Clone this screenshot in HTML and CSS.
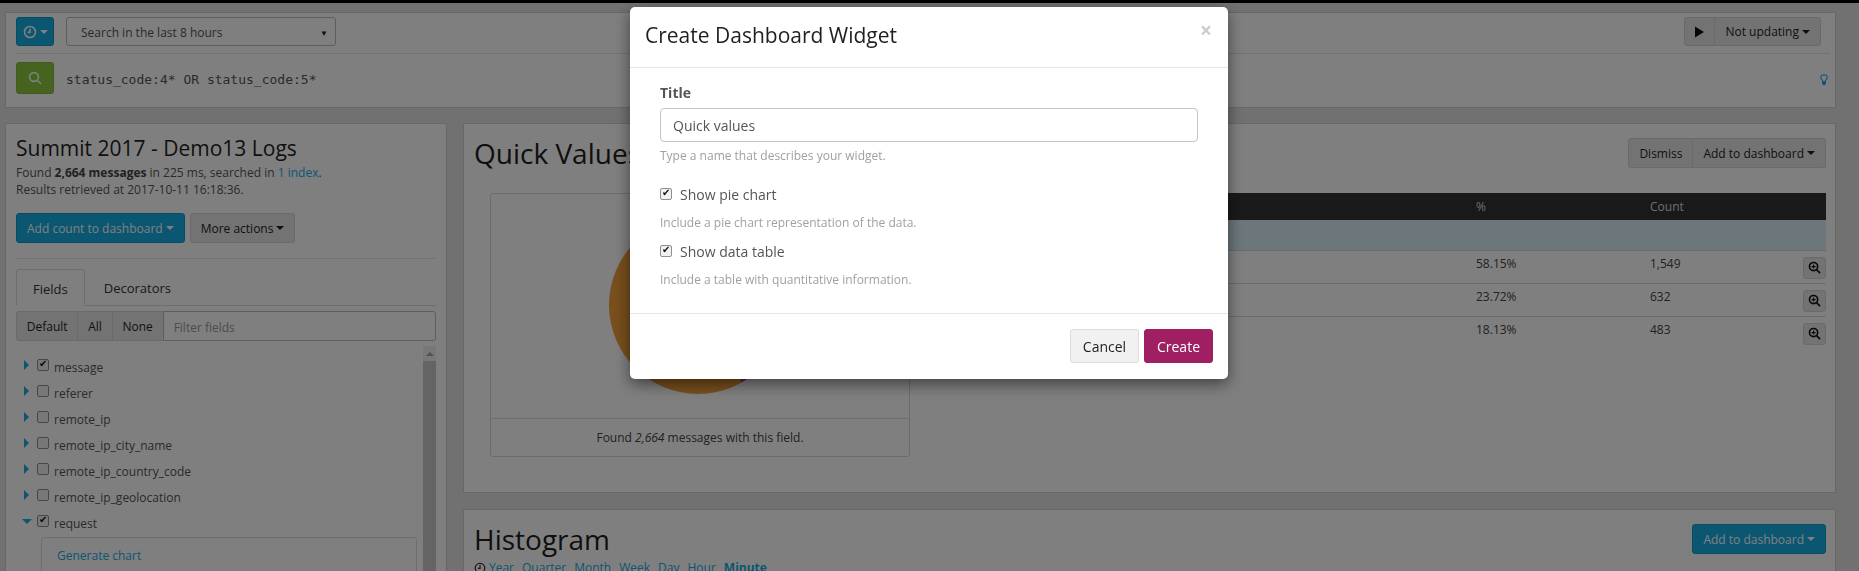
FILE: index.html
```html
<!DOCTYPE html>
<html lang="en">
<head>
    <meta charset="UTF-8">
    <meta name="viewport" content="width=device-width, initial-scale=1.0">
    <title>Summit 2017 - Demo13 Logs</title>
    <link rel="stylesheet" href="styles.css">
</head>
<body>
    <div class="top-line"></div>
    <div class="page">
        <div class="panel search-panel">
            <div class="search-top">
                <button class="btn btn-blue range-btn">
                    <svg class="icon" viewBox="0 0 14 14"><circle cx="7" cy="7" r="5.5"/><path d="M7 3.8V7.4H4.6"/></svg>
                    <span class="caret"></span>
                </button>
                <div class="range-select">Search in the last 8 hours<span class="select-arrow">▼</span></div>
                <div class="btn-group refresh-group">
                    <button class="btn play-btn"><svg class="play" viewBox="0 0 10 12"><path d="M0 0L10 6L0 12Z"/></svg></button>
                    <button class="btn">Not updating <span class="caret"></span></button>
                </div>
            </div>
            <div class="search-bottom">
                <button class="btn btn-green go-btn">
                    <svg class="icon" viewBox="0 0 14 14"><circle cx="6" cy="6" r="4.4"/><path d="M9.2 9.2L13 13"/></svg>
                </button>
                <div class="query">status_code:4* OR status_code:5*</div>
                <svg class="bulb" viewBox="0 0 10 14"><path d="M3.4 9.4C3.2 7.6 1 6.8 1 4.6C1 2.4 2.8 1 5 1C7.2 1 9 2.4 9 4.6C9 6.8 6.8 7.6 6.6 9.4Z"/><path class="bulb-base" d="M3.4 10H6.6V12L5.6 13.4H4.4L3.4 12Z"/></svg>
            </div>
        </div>

        <div class="main">
            <div class="panel sidebar">
                <h2 class="stream-title">Summit 2017 - Demo13 Logs</h2>
                <p class="result-info">Found <b>2,664 messages</b> in 225 ms, searched in <a href="#">1 index</a>.<br>Results retrieved at 2017-10-11 16:18:36.</p>
                <div class="sidebar-actions">
                    <button class="btn btn-blue">Add count to dashboard <span class="caret"></span></button>
                    <button class="btn">More actions <span class="caret"></span></button>
                </div>
                <div class="tabs">
                    <div class="tab tab-active">Fields</div>
                    <div class="tab">Decorators</div>
                </div>
                <div class="filter-row">
                    <button class="btn filter-btn">Default</button>
                    <button class="btn filter-btn">All</button>
                    <button class="btn filter-btn">None</button>
                    <div class="filter-input">Filter fields</div>
                </div>
                <div class="field-area">
                    <ul class="field-list">
                        <li class="field"><span class="arrow"></span><input type="checkbox" checked><span>message</span></li>
                        <li class="field"><span class="arrow"></span><input type="checkbox"><span>referer</span></li>
                        <li class="field"><span class="arrow"></span><input type="checkbox"><span>remote_ip</span></li>
                        <li class="field"><span class="arrow"></span><input type="checkbox"><span>remote_ip_city_name</span></li>
                        <li class="field"><span class="arrow"></span><input type="checkbox"><span>remote_ip_country_code</span></li>
                        <li class="field"><span class="arrow"></span><input type="checkbox"><span>remote_ip_geolocation</span></li>
                        <li class="field"><span class="arrow arrow-open"></span><input type="checkbox" checked><span>request</span></li>
                    </ul>
                    <div class="field-box"><a href="#">Generate chart</a></div>
                    <div class="scrollbar">
                        <div class="scroll-up"></div>
                        <div class="scroll-thumb"></div>
                    </div>
                </div>
            </div>

            <div class="content">
                <div class="panel quick-values">
                    <div class="panel-head">
                        <h1>Quick Values</h1>
                        <div class="btn-group">
                            <button class="btn">Dismiss</button>
                            <button class="btn">Add to dashboard <span class="caret"></span></button>
                        </div>
                    </div>
                    <div class="qv-body">
                        <div class="pie-box">
                            <div class="pie-area"><div class="pie"></div></div>
                            <div class="pie-foot">Found <em>2,664</em> messages with this field.</div>
                        </div>
                        <table class="qv-table">
                            <thead>
                                <tr><th class="col-value">Value</th><th class="col-pct">%</th><th>Count</th></tr>
                            </thead>
                            <tbody>
                                <tr class="row-highlight"><td colspan="3"></td></tr>
                                <tr>
                                    <td>200</td><td>58.15%</td>
                                    <td>1,549<button class="btn zoom-btn"><svg class="zoom" viewBox="0 0 14 14"><circle cx="6" cy="6" r="4.4"/><path d="M9.2 9.2L13 13"/><path class="thin" d="M3.8 6H8.2M6 3.8V8.2"/></svg></button></td>
                                </tr>
                                <tr>
                                    <td>404</td><td>23.72%</td>
                                    <td>632<button class="btn zoom-btn"><svg class="zoom" viewBox="0 0 14 14"><circle cx="6" cy="6" r="4.4"/><path d="M9.2 9.2L13 13"/><path class="thin" d="M3.8 6H8.2M6 3.8V8.2"/></svg></button></td>
                                </tr>
                                <tr>
                                    <td>500</td><td>18.13%</td>
                                    <td>483<button class="btn zoom-btn"><svg class="zoom" viewBox="0 0 14 14"><circle cx="6" cy="6" r="4.4"/><path d="M9.2 9.2L13 13"/><path class="thin" d="M3.8 6H8.2M6 3.8V8.2"/></svg></button></td>
                                </tr>
                            </tbody>
                        </table>
                    </div>
                </div>

                <div class="panel histogram">
                    <div class="panel-head">
                        <h1>Histogram</h1>
                        <button class="btn btn-blue">Add to dashboard <span class="caret"></span></button>
                    </div>
                    <div class="resolution">
                        <svg class="res-clock" viewBox="0 0 14 14"><circle cx="7" cy="7" r="5.5"/><path d="M7 3.8V7.4H4.6"/></svg>
                        <a href="#">Year</a><a href="#">Quarter</a><a href="#">Month</a><a href="#">Week</a><a href="#">Day</a><a href="#">Hour</a><a href="#" class="selected">Minute</a>
                    </div>
                </div>
            </div>
        </div>
    </div>

    <div class="backdrop"></div>

    <div class="modal">
        <div class="modal-head">
            <h3>Create Dashboard Widget</h3>
            <span class="close">×</span>
        </div>
        <div class="modal-body">
            <label class="form-label">Title</label>
            <div class="text-input">Quick values</div>
            <p class="help title-help">Type a name that describes your widget.</p>
            <label class="check-line"><input type="checkbox" checked>Show pie chart</label>
            <p class="help">Include a pie chart representation of the data.</p>
            <label class="check-line"><input type="checkbox" checked>Show data table</label>
            <p class="help">Include a table with quantitative information.</p>
        </div>
        <div class="modal-foot">
            <button class="btn btn-cancel">Cancel</button>
            <button class="btn btn-create">Create</button>
        </div>
    </div>
</body>
</html>
```

FILE: styles.css
```css
* {
    box-sizing: border-box;
}
html, body {
    height: 571px;
    overflow: hidden;
}
body {
    margin: 0;
    background-color: #e3e3e3;
    color: #1f1f1f;
    font-family: "Open Sans", sans-serif;
    font-size: 12px;
}
a {
    color: #16ace3;
    text-decoration: none;
}
.top-line {
    height: 3px;
    background-color: #000;
}
.page {
    padding: 9px 23px 0 5px;
}
.panel {
    background-color: #fff;
    border: 1px solid #d1d1d1;
}

/* buttons */
.btn {
    display: inline-flex;
    align-items: center;
    justify-content: center;
    gap: 3px;
    height: 30px;
    padding: 0 10px;
    background-color: #e6e6e6;
    border: 1px solid #d4d4d4;
    border-radius: 3px;
    color: #1f1f1f;
    font-family: inherit;
    font-size: 12px;
}
.btn-blue {
    background-color: #16ace3;
    border-color: #1497c8;
    color: #fff;
}
.btn-green {
    background-color: #8dc63f;
    border-color: #83b83a;
    color: #fff;
}
.caret {
    display: inline-block;
    border-top: 4px solid currentColor;
    border-left: 4px solid transparent;
    border-right: 4px solid transparent;
}
.btn-group {
    display: flex;
}
.btn-group .btn:first-child {
    border-radius: 3px 0 0 3px;
}
.btn-group .btn:last-child {
    border-left: 0;
    border-radius: 0 3px 3px 0;
}
.icon {
    width: 14px;
    height: 14px;
    fill: none;
    stroke: #fff;
    stroke-width: 1.6;
}

/* search bar */
.search-panel {
    height: 96px;
    padding: 4px 5px 0 10px;
}
.search-top {
    display: flex;
    align-items: center;
    height: 37px;
    padding-bottom: 7px;
    border-bottom: 1px solid #e5e5e5;
}
.range-btn {
    width: 38px;
    height: 29px;
    padding: 0;
}
.range-select {
    display: flex;
    justify-content: space-between;
    align-items: center;
    width: 270px;
    height: 29px;
    margin-left: 12px;
    padding: 1px 7px 0 14px;
    border: 1px solid #bdbdbd;
    border-radius: 3px;
    color: #555;
    font-size: 12px;
}
.select-arrow {
    font-size: 8px;
    color: #222;
}
.refresh-group {
    margin-left: auto;
    margin-right: 9px;
}
.refresh-group .btn {
    height: 29px;
}
.play-btn {
    width: 31px;
}
.play {
    width: 10px;
    height: 12px;
    fill: #111;
}
.search-bottom {
    display: flex;
    align-items: center;
    padding-top: 8px;
}
.go-btn {
    width: 38px;
    height: 32px;
    padding: 0;
}
.query {
    flex: 1;
    margin-left: 12px;
    padding-top: 2px;
    color: #555;
    font-family: "DejaVu Sans Mono", monospace;
    font-size: 13px;
}
.bulb {
    width: 8px;
    height: 13px;
    margin: 2px 2px 0 0;
    fill: none;
    stroke: #16ace3;
    stroke-width: 1.3;
}
.bulb-base {
    fill: #16ace3;
}

/* columns */
.main {
    display: grid;
    grid-template-columns: 442px 1373px;
    gap: 16px;
    margin-top: 15px;
}
.sidebar {
    height: 460px;
    padding: 10px 10px 0;
}
.stream-title {
    margin: 0 0 2px;
    font-size: 21px;
    font-weight: 400;
    line-height: 28px;
}
.result-info {
    margin: 0;
    color: #555;
    font-size: 12px;
    line-height: 17px;
}
.result-info b {
    color: #444;
}
.sidebar-actions {
    display: flex;
    gap: 5px;
    margin-top: 15px;
    padding-bottom: 15px;
    border-bottom: 1px solid #e5e5e5;
}
.tabs {
    display: flex;
    margin-top: 10px;
    border-bottom: 1px solid #ddd;
    height: 37px;
}
.tab {
    padding: 10px 16px 0;
    font-size: 13px;
    color: #333;
    height: 37px;
    margin-right: 3px;
}
.tab-active {
    background-color: #fff;
    border: 1px solid #ddd;
    border-bottom-color: #fff;
    border-radius: 3px 3px 0 0;
}
.filter-row {
    display: flex;
    height: 30px;
    margin-top: 5px;
}
.filter-btn {
    padding: 0 9.8px;
    border-radius: 0;
    border-right: 0;
}
.filter-btn:first-child {
    border-radius: 3px 0 0 3px;
}
.filter-input {
    flex: 1;
    padding: 7px 10px;
    border: 1px solid #bdbdbd;
    border-radius: 0 3px 3px 0;
    color: #999;
}
.field-area {
    position: relative;
    margin-top: 5px;
    padding-top: 8px;
}
.field-list {
    margin: 0;
    padding: 0;
    list-style: none;
}
.field {
    display: flex;
    align-items: center;
    height: 26px;
    color: #555;
}
.arrow {
    width: 0;
    height: 0;
    margin: -5px 0 0 8px;
    border-left: 5px solid #16ace3;
    border-top: 5px solid transparent;
    border-bottom: 5px solid transparent;
}
.arrow-open {
    margin-left: 6px;
    margin-top: -4px;
    border-top: 5px solid #16ace3;
    border-left: 5px solid transparent;
    border-right: 5px solid transparent;
    border-bottom: 0;
}
.arrow-open + input[type="checkbox"] {
    margin-left: 5px;
}
input[type="checkbox"] {
    appearance: none;
    position: relative;
    flex: none;
    width: 12px;
    height: 12px;
    margin: -5px 5px 0 8px;
    background-color: #f1f1f1;
    border: 1px solid #8f8f8f;
    border-radius: 2px;
}
input[type="checkbox"]:checked::after {
    content: "✔";
    position: absolute;
    left: 1px;
    top: -2px;
    color: #111;
    font-family: "DejaVu Sans", sans-serif;
    font-size: 10px;
}
.field-box {
    width: 376px;
    height: 60px;
    margin: 1px 0 0 25px;
    padding: 9px 15px;
    border: 1px solid #ddd;
    border-radius: 3px;
}
/* scrollbar sits on top of the field list */
.scrollbar {
    position: absolute;
    top: 0;
    right: 0;
    width: 13px;
    height: 240px;
    background-color: #f0f0f0;
}
.scroll-up {
    width: 0;
    margin: 6px auto 0;
    border-bottom: 4px solid #a3a3a3;
    border-left: 4px solid transparent;
    border-right: 4px solid transparent;
}
.scroll-thumb {
    height: 220px;
    margin-top: 5px;
    background-color: #c9c9c9;
}

/* right side */
.content {
    display: flex;
    flex-direction: column;
    gap: 16px;
}
.panel-head {
    display: flex;
    justify-content: space-between;
    align-items: flex-start;
}
.panel-head h1 {
    margin: 0;
    font-size: 28px;
    font-weight: 400;
    line-height: 30px;
}
.quick-values {
    height: 370px;
    padding: 14px 9px 0 10px;
}
.qv-body {
    display: flex;
    margin-top: 25px;
    padding-left: 16px;
}
.pie-box {
    flex: none;
    width: 420px;
    height: 264px;
    border: 1px solid #d9d9d9;
    border-radius: 3px;
}
.pie-area {
    height: 225px;
    padding: 22px 0 0 118px;
    border-bottom: 1px solid #ddd;
}
.pie {
    width: 178px;
    height: 178px;
    border-radius: 50%;
    background: conic-gradient(#a64ca6 0deg 150.6deg, #f09e3a 150.6deg 360deg);
}
.pie-foot {
    padding-top: 10px;
    color: #444;
    text-align: center;
}
.qv-table {
    flex: 1;
    align-self: flex-start;
    margin-left: 15px;
    border-collapse: collapse;
    table-layout: fixed;
}
.qv-table th {
    height: 27px;
    padding: 0 8px;
    background-color: #333;
    color: #ddd;
    font-weight: 400;
    text-align: left;
}
.col-value {
    width: 543px;
}
.col-pct {
    width: 174px;
}
.qv-table td {
    height: 33px;
    padding: 4px 0 0 8px;
    border-top: 1px solid #d9d9d9;
    color: #444;
    vertical-align: top;
}
.qv-table tr.row-highlight td {
    height: 30px;
    background-color: #d9edf7;
    border-top: 0;
}
.zoom-btn {
    float: right;
    width: 23px;
    height: 22px;
    margin-top: 2px;
    padding: 0;
}
.zoom {
    width: 13px;
    height: 13px;
    fill: none;
    stroke: #111;
    stroke-width: 1.8;
}
.zoom .thin {
    stroke-width: 1.2;
}
.histogram {
    height: 80px;
    padding: 14px 9px 0 10px;
}
.resolution {
    display: flex;
    align-items: center;
    margin-top: 5px;
    font-size: 12px;
}
.res-clock {
    width: 12px;
    height: 12px;
    margin-right: 3px;
    fill: none;
    stroke: #333;
    stroke-width: 1.5;
}
.resolution a {
    margin-right: 8px;
}
.resolution .selected {
    font-weight: 700;
}

/* modal */
.backdrop {
    position: fixed;
    inset: 0;
    background-color: rgba(0, 0, 0, 0.5);
}
.modal {
    position: fixed;
    left: 630px;
    top: 7px;
    width: 598px;
    height: 372px;
    background-color: #fff;
    border-radius: 5px;
    box-shadow: 0 5px 15px rgba(0, 0, 0, 0.5);
}
.modal-head {
    display: flex;
    justify-content: space-between;
    height: 61px;
    padding: 0 15px;
    border-bottom: 1px solid #e5e5e5;
}
.modal-head h3 {
    margin: 0;
    font-size: 21px;
    font-weight: 400;
    line-height: 57px;
    color: #1f1f1f;
}
.close {
    padding-top: 13px;
    padding-right: 1px;
    color: #ccc;
    font-size: 21px;
    font-weight: 700;
    line-height: 20px;
}
.modal-body {
    height: 245px;
    padding: 16px 30px 0;
}
.form-label {
    display: block;
    color: #555;
    font-size: 14px;
    font-weight: 700;
    line-height: 18px;
}
.text-input {
    height: 34px;
    margin-top: 6px;
    padding: 7px 12px;
    border: 1px solid #c4c4c4;
    border-radius: 4px;
    color: #555;
    font-size: 14px;
}
.help {
    margin: 5px 0 0;
    color: #a0a0a0;
    font-size: 12px;
    line-height: 17px;
}
.title-help {
    margin-bottom: 20px;
}
.check-line {
    display: flex;
    align-items: center;
    height: 20px;
    color: #555;
    font-size: 14px;
}
.check-line input[type="checkbox"] {
    margin: 0 8px 0 0;
}
.check-line + .help {
    margin: 10px 0;
}
.modal-foot {
    display: flex;
    justify-content: flex-end;
    gap: 5px;
    padding: 15px;
    border-top: 1px solid #e5e5e5;
}
.modal-foot .btn {
    width: 69px;
    height: 34px;
    font-size: 14px;
}
.btn-cancel {
    background-color: #f1f1f1;
    border-color: #ddd;
}
.btn-create {
    background-color: #a01f63;
    border-color: #a01f63;
    color: #fff;
}
```
